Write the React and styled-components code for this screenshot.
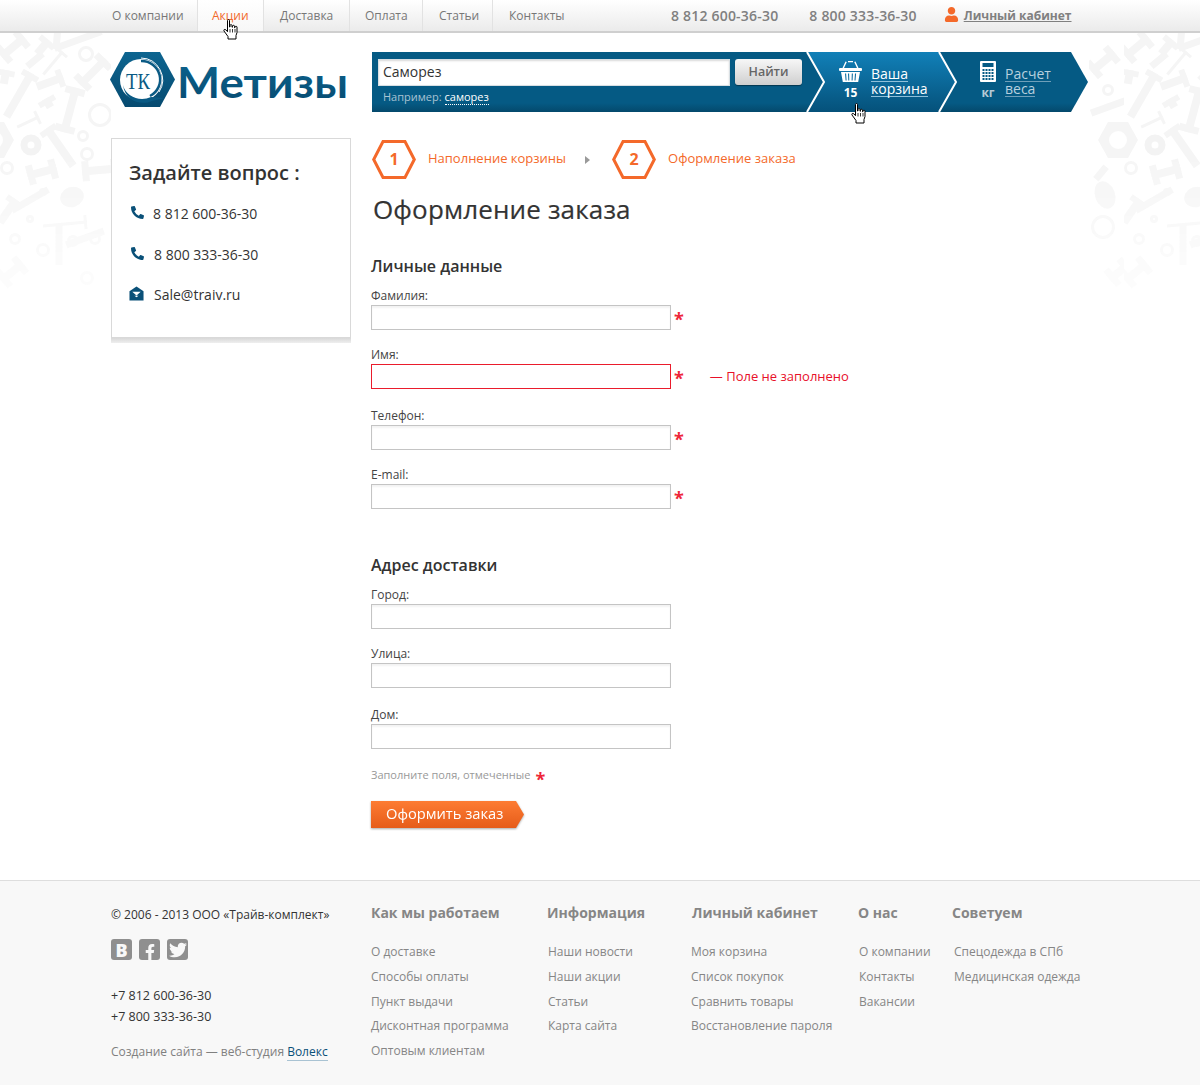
import React from "react";
import styled, { createGlobalStyle } from "styled-components";
import { FaPhoneAlt, FaUser, FaFacebookF, FaTwitter } from "react-icons/fa";

const GlobalStyle = createGlobalStyle`
  html, body {
    margin: 0;
    padding: 0;
    background: #fff;
    font-family: "Open Sans", "Noto Sans", sans-serif;
    color: #333;
  }
  * {
    box-sizing: border-box;
  }
`;

const Page = styled.div`
  position: relative;
  width: 100%;
  height: 1085px;
  overflow: hidden;
  display: flex;
  flex-direction: column;
`;

const Pattern = styled.svg`
  position: absolute;
  top: 33px;
  left: 0;
  width: 100%;
  height: 300px;
  mask-image: linear-gradient(#000 40%, transparent 100%);
`;

const TopBar = styled.header`
  position: relative;
  z-index: 3;
  height: 33px;
  flex: none;
  background: linear-gradient(#fff, #ebebeb);
  border-bottom: 2px solid #cfcfcf;
`;

const TopInner = styled.div`
  width: 978px;
  height: 31px;
  margin: 0 auto;
  display: flex;
  align-items: stretch;
`;

const Nav = styled.nav`
  display: flex;
  width: 560px;
`;

const NavItem = styled.a`
  position: relative;
  flex: none;
  width: ${(p) => p.$w}px;
  padding-left: ${(p) => p.$pl}px;
  display: flex;
  align-items: center;
  font-size: 12px;
  color: ${(p) => (p.$active ? "#f2692a" : "#777")};
  background: ${(p) => (p.$active ? "linear-gradient(#fff, #f7f7f7)" : "none")};
  border-right: 1px solid #e2e2e2;
  &:last-child {
    border-right: none;
  }
`;

const NavCursor = styled.span`
  position: absolute;
  left: 25px;
  top: 19px;
`;

const TopPhone = styled.span`
  align-self: center;
  font-size: 14px;
  letter-spacing: 0.2px;
  font-weight: 600;
  color: #808080;
  margin-right: 31px;
`;

const Cabinet = styled.a`
  align-self: center;
  display: flex;
  align-items: center;
  gap: 5px;
  margin-left: -4px;
  font-size: 12px;
  font-weight: 700;
  color: #808080;
  text-decoration: underline;
  svg {
    color: #f4692a;
    width: 15px;
    height: 15px;
    margin-top: -3px;
  }
`;

const Wrap = styled.div`
  position: relative;
  z-index: 1;
  flex: 1;
  width: 978px;
  margin: 0 auto;
  background: #fff;
`;

const HeadRow = styled.div`
  display: flex;
  height: 105px;
  padding-top: 18px;
`;

const LogoBox = styled.a`
  flex: none;
  width: 262px;
  margin-left: -1px;
  svg {
    display: block;
  }
`;

const BarWrap = styled.div`
  position: relative;
  width: 716px;
  height: 60px;
  margin-top: 1px;
`;

const Bar = styled.div`
  display: flex;
  height: 60px;
  background: linear-gradient(#055a84 0, #055a84 85%, #04496c 100%);
  clip-path: polygon(0 0, 699px 0, 716px 30px, 699px 60px, 0 60px);
`;

const SearchPart = styled.form`
  flex: none;
  width: 436px;
  padding: 7px 0 0 6px;
`;

const SearchRow = styled.div`
  display: flex;
  gap: 5px;
`;

const SearchInput = styled.input`
  width: 352px;
  height: 27px;
  padding: 0 4px 2px;
  border: 1px solid #d8dfe3;
  background: #fff;
  font: 14px "Open Sans", sans-serif;
  color: #333;
  box-shadow: inset 0 1px 2px rgba(0, 0, 0, 0.15);
  outline: none;
`;

const SearchButton = styled.button`
  width: 67px;
  height: 26px;
  border: none;
  border-radius: 3px;
  background: linear-gradient(#f7f7f7, #cfcfcf);
  box-shadow: 0 1px 1px rgba(0, 0, 0, 0.4);
  font: 600 12.5px "Open Sans", sans-serif;
  color: #666;
  padding: 0 0 1px;
`;

const Hint = styled.div`
  margin: 3px 0 0 5px;
  font-size: 11px;
  line-height: 15px;
  color: #a9c3d3;
  span {
    color: #fff;
    border-bottom: 1px dotted #fff;
  }
`;

const CartPart = styled.div`
  flex: none;
  width: 148px;
  display: flex;
  background: linear-gradient(#1180b8, #05517a);
  clip-path: polygon(0 0, 131px 0, 148px 30px, 131px 60px, 0 60px, 17px 30px);
`;

const CalcPart = styled.div`
  flex: 1;
  display: flex;
`;

const IconCol = styled.div`
  flex: none;
  width: ${(p) => p.$w}px;
  margin-left: ${(p) => p.$ml}px;
  display: flex;
  flex-direction: column;
  align-items: center;
  padding-top: 9px;
`;

const IconCount = styled.span`
  font-size: ${(p) => p.$size}px;
  line-height: 14px;
  margin-top: 4px;
  font-weight: 700;
  color: ${(p) => p.$color};
`;

const BarLink = styled.div`
  display: flex;
  flex-direction: column;
  align-items: flex-start;
  margin-left: ${(p) => p.$ml}px;
  padding-top: 15px;
  font-size: 14px;
  color: ${(p) => p.$color};
  span {
    border-bottom: 1px solid ${(p) => p.$line};
    line-height: 14px;
  }
`;

const Chevrons = styled.svg`
  position: absolute;
  top: 0;
  left: 0;
  pointer-events: none;
`;

const CartCursor = styled.span`
  position: absolute;
  left: 479px;
  top: 51px;
`;

const Content = styled.div`
  display: flex;
  gap: 20px;
`;

const Aside = styled.aside`
  flex: none;
  width: 240px;
`;

const AskBox = styled.div`
  height: 200px;
  border: 1px solid #d9d9d9;
  padding: 18px 17px 0;
  background: #fff;
`;

const AskBand = styled.div`
  height: 5px;
  background: linear-gradient(#d8d8d8, #efefef);
`;

const AskTitle = styled.h3`
  margin: 0 0 14px;
  font-size: 20px;
  line-height: 32px;
  font-weight: 600;
  color: #333;
`;

const AskRow = styled.div`
  display: flex;
  align-items: center;
  height: 20px;
  margin-bottom: ${(p) => p.$mb}px;
  font-size: 14px;
  color: #333;
  gap: ${(p) => p.$gap}px;
  svg {
    flex: none;
    width: ${(p) => p.$icon}px;
    height: ${(p) => p.$icon}px;
    margin-left: ${(p) => 15 - p.$icon}px;
    color: #0a5078;
    margin-top: -1px;
  }
`;

const Main = styled.main`
  flex: 1;
  padding-top: 2px;
`;

const Steps = styled.div`
  display: flex;
  align-items: center;
  height: 39px;
  margin-left: 1px;
`;

const StepHex = styled.div`
  position: relative;
  width: 44px;
  height: 39px;
  padding-bottom: 2px;
  display: flex;
  align-items: center;
  justify-content: center;
  font-size: 16px;
  font-weight: 700;
  color: #f4692a;
  svg {
    position: absolute;
    inset: 0;
  }
  span {
    position: relative;
  }
`;

const StepText = styled.span`
  margin: -3px 0 0 12px;
  font-size: 13px;
  color: #f4692a;
`;

const StepArrow = styled.i`
  width: 0;
  height: 0;
  margin: 1px 22px 0 19px;
  border-left: 5px solid #9a9a9a;
  border-top: 4px solid transparent;
  border-bottom: 4px solid transparent;
`;

const Title = styled.h1`
  margin: 12px 0 0 2px;
  font-size: 26px;
  line-height: 36px;
  font-weight: 400;
  letter-spacing: 0.15px;
  color: #333;
  -webkit-text-stroke: 0.2px #333;
`;

const Section = styled.h2`
  margin: ${(p) => p.$mt}px 0 11px;
  font-size: 16px;
  line-height: 22px;
  font-weight: 600;
  color: #333;
`;

const Field = styled.div`
  margin-bottom: ${(p) => p.$mb || 0}px;
`;

const Label = styled.label`
  display: block;
  margin-bottom: 1px;
  font-size: 12px;
  line-height: 16px;
  color: #444;
`;

const FieldRow = styled.div`
  display: flex;
  align-items: flex-start;
`;

const Input = styled.input`
  flex: none;
  width: 300px;
  height: 25px;
  padding: 0 5px;
  background: #fff;
  border: 1px solid ${(p) => (p.$error ? "#ea1c2c" : "#c4c4c4")};
  box-shadow: ${(p) => (p.$error ? "none" : "inset 0 2px 2px rgba(0, 0, 0, 0.05)")};
  outline: none;
`;

const Star = styled.span`
  font-size: 18px;
  line-height: 24px;
  font-weight: 700;
  color: #ee2638;
  margin-left: ${(p) => p.$ml}px;
  height: ${(p) => p.$h}px;
  padding-top: ${(p) => p.$pt}px;
`;

const ErrorText = styled.span`
  margin-left: 26px;
  font-size: 13px;
  line-height: 25px;
  color: #e8102a;
`;

const Note = styled.div`
  display: flex;
  margin-top: 18px;
  height: 16px;
  font-size: 11px;
  line-height: 16px;
  color: #999;
`;

const SubmitShadow = styled.div`
  width: 153px;
  margin-top: 18px;
  filter: drop-shadow(0 1px 1px rgba(0, 0, 0, 0.35));
`;

const Submit = styled.button`
  display: block;
  width: 153px;
  height: 27px;
  padding: 0 0 3px 15px;
  border: none;
  text-align: left;
  background: linear-gradient(#fd7c33, #e65c1a);
  clip-path: polygon(0 0, 145px 0, 153px 13.5px, 145px 27px, 0 27px);
  font: 400 14.7px "Open Sans", sans-serif;
  color: #fff;
`;

const Footer = styled.footer`
  position: relative;
  z-index: 1;
  flex: none;
  height: 205px;
  background: #f8f8f8;
  border-top: 1px solid #dedede;
`;

const FooterInner = styled.div`
  width: 978px;
  margin: 0 auto;
  display: flex;
  padding-top: 22px;
`;

const FootAbout = styled.div`
  flex: none;
  width: 260px;
  padding-top: 2px;
`;

const Copy = styled.div`
  font-size: 12px;
  line-height: 20px;
  color: #333;
`;

const Socials = styled.div`
  display: flex;
  gap: 7px;
  margin-top: 14px;
`;

const Social = styled.a`
  width: 21px;
  height: 21px;
  border-radius: 3px;
  background: #8f8f8f;
  color: #f8f8f8;
  display: flex;
  align-items: center;
  justify-content: center;
  overflow: hidden;
  font: 800 18px "Open Sans", sans-serif;
  svg.facebook {
    margin-top: 5px;
  }
`;

const FootPhones = styled.div`
  margin-top: 25px;
  font-size: 12.5px;
  line-height: 21px;
  color: #333;
`;

const Credit = styled.div`
  margin-top: 15px;
  font-size: 12px;
  line-height: 20px;
  color: #808080;
  a {
    color: #0a5078;
    border-bottom: 1px solid #a9c3d3;
  }
`;

const FootCol = styled.div`
  flex: none;
  width: ${(p) => p.$w}px;
`;

const FootTitle = styled.div`
  font-size: 14px;
  line-height: 20px;
  font-weight: 700;
  color: #868686;
  margin-bottom: 17px;
  padding-left: ${(p) => p.$pl || 0}px;
`;

const FootLink = styled.a`
  display: block;
  font-size: 12px;
  line-height: 24.75px;
  color: #868686;
  padding-left: ${(p) => p.$pl || 0}px;
`;

function Hand() {
  return (
    <svg width="16" height="23" viewBox="0 0 16 23">
      <path
        d="M4.500 1.500c0-1.300 2-1.300 2 0v6.500h.5v-1.500c0-1.200 2-1.200 2 0v1.700h.5v-1c0-1.200 2-1.200 2 0v1.500h.5v-.6c0-1.100 2-1.100 2 0v5.400l-1 3v3.500h-8v-2.500l-4-5.500c-.7-1.200.8-2.300 1.800-1.200l1.700 1.900z"
        fill="#fff"
        stroke="#000"
        strokeWidth="1"
      />
      <path d="M7 10v3.500M9.500 10v3.500M12 10v3.500" stroke="#000" strokeWidth="0.8" />
    </svg>
  );
}

function Basket() {
  return (
    <svg width="23" height="21" viewBox="0 0 23 21" fill="#fff">
      <path d="M6.500 0.500l1.300.6-2.800 6h-1.500zM16.500 .5l-1.300.6 2.800 6h1.500zM9 0h5v1.300H9z" />
      <rect x="0" y="7" width="23" height="3" rx="1" />
      <path d="M2 11h19l-1.800 10H3.800zM6 12.500l.6 7h1l-.5-7zM9 12.500l.3 7h1l-.2-7zM12.800 12.500l-.2 7h1l.3-7zM16 12.500l-.5 7h1l.6-7z" fillRule="evenodd" />
    </svg>
  );
}

function Calculator() {
  const cells = [];
  for (let row = 0; row < 4; row++) {
    for (let col = 0; col < 4; col++) {
      cells.push(<rect key={`${row}-${col}`} x={2.5 + col * 3} y={8 + row * 3} width="2" height="2" />);
    }
  }
  return (
    <svg width="16" height="21" viewBox="0 0 16 21">
      <rect width="16" height="21" rx="1" fill="#fff" />
      <g fill="#055a84">
        <rect x="2.500" y="2" width="11" height="4" />
        {cells}
      </g>
    </svg>
  );
}

function Mail() {
  return (
    <svg viewBox="0 0 16 15">
      <path d="M8 0l7.500 5v10H.5V5z" fill="currentColor" />
      <path d="M3.500 5.500h9L8 9.500z M5.800 9.800h4.400L8 11.600z" fill="#fff" />
    </svg>
  );
}

function Logo() {
  return (
    <svg width="250" height="58" viewBox="0 0 250 58">
      <defs>
        <linearGradient id="logoFill" x1="0" y1="0" x2="0" y2="1">
          <stop offset="0" stopColor="#0d6590" />
          <stop offset="1" stopColor="#064a70" />
        </linearGradient>
      </defs>
      <path d="M15 1h35l15 27.500-15 27.500H15L0 28.500z" fill="url(#logoFill)" />
      <circle cx="31" cy="29" r="21" fill="#fff" />
      <path d="M31 10a18.500 18.500 0 0 1 9 35" fill="none" stroke="#0a5a84" strokeWidth="2.500" />
      <path d="M13 34c3 12 17 17 28 12l13 1-12 3c-11 5-27 0-29-16z" fill="#0a5a84" />
      <path d="M31 7a22 22 0 0 1 18 34" fill="none" stroke="#fff" strokeWidth="1" />
      <text x="28" y="38" textAnchor="middle" fontFamily="Liberation Serif, serif" fontSize="24" fill="#0a5a84" textLength="24" lengthAdjust="spacingAndGlyphs">ТК</text>
      <text x="67" y="47" fontFamily="Lato, sans-serif" fontSize="42" fontWeight="700" fill="url(#logoFill)" textLength="171" lengthAdjust="spacingAndGlyphs">Метизы</text>
    </svg>
  );
}

const PIECES = [
  ["cross", 13, 14, 50, 30], ["bolt", 43, 14, 40, 18], ["bar", 57, 5, 5, 22], ["bar", 78, 7, 70, 50],
  ["washer", 86, 21, 0, 8], ["bar", 35, 27, 50, 20], ["thin", 53, 30, 40, 30], ["cross", 93, 39, 45, 36],
  ["bolt", 5, 44, 10, 14], ["bolt", 19, 62, 30, 50], ["bolt", 50, 49, 70, 28], ["cross", 70, 77, 15, 46],
  ["bolt", 48, 70, -30, 10], ["washer", 100, 82, 0, 12], ["nut", -6, 107, 0, 20], ["thin", 28, 89, 65, 24],
  ["thick", 31, 112, 0, 10], ["bolt", 60, 114, -35, 46], ["washer", 83, 103, 0, 6], ["washer", 87, 121, 0, 7],
  ["washer", 7, 135, 0, 7], ["cross", 100, 137, 85, 36], ["cross", 42, 139, 75, 30], ["bar", 30, 167, 60, 42],
  ["washer", 43, 159, 0, 4], ["screw", 72, 164, -20, 24], ["bolt", 8, 178, 35, 28], ["washer", 30, 186, 0, 4],
  ["thin", 65, 191, 85, 44], ["washer", 15, 206, 0, 6], ["washer", 73, 208, 0, 6], ["washer", 95, 206, 0, 6],
  ["washer", 43, 217, 0, 7], ["bar", 59, 212, 0, 40], ["washer", 87, 245, 0, 7], ["cross", 12, 239, 50, 28],
  ["bar", 85, 205, 70, 40], ["cross", 260, 29, 50, 30], ["washer", 265, 57, 0, 6], ["bar", 265, 74, 70, 36],
  ["nut", 275, 107, 0, 20], ["bar", 258, 140, 40, 16], ["screw", 262, 162, 70, 28], ["washer", 260, 194, 0, 12],
  ["cross", 276, 239, 50, 24],
];

const BOLT = "#f5f5f5";

function Piece({ kind, x, y, rot, size }) {
  const t = `translate(${x} ${y}) rotate(${rot})`;
  if (kind === "washer") return <circle cx={x} cy={y} r={size - 1.500} fill="none" stroke={BOLT} strokeWidth="3" />;
  if (kind === "thick") return <circle cx={x} cy={y} r={size - 3} fill="none" stroke="#f3f3f3" strokeWidth="7" />;
  if (kind === "nut") {
    return (
      <g transform={t}>
        <path d="M-10-18H10L20 0 10 18H-10L-20 0z" fill={BOLT} />
        <circle r="9" fill="#fff" />
      </g>
    );
  }
  if (kind === "screw") {
    return (
      <g transform={t}>
        <ellipse rx={size / 2} ry="10" fill={BOLT} />
      </g>
    );
  }
  if (kind === "bar") return <rect transform={t} x="-3.500" y={-size / 2} width="7" height={size} fill={BOLT} />;
  if (kind === "thin") {
    return (
      <g transform={t} fill={BOLT}>
        <rect x="-1.500" y={-size / 2} width="3" height={size} />
        <rect x="-7" y={-size / 2} width="14" height="3" />
      </g>
    );
  }
  if (kind === "cross") {
    return (
      <g transform={t} fill={BOLT}>
        <rect x="-4" y={-size / 2} width="8" height={size} />
        <rect x="-10" y={-size / 2} width="20" height="7" />
        <rect x="-10" y={size / 2 - 7} width="20" height="7" />
      </g>
    );
  }
  return (
    <g transform={t} fill={BOLT}>
      <rect x="-4" y={-size / 2} width="8" height={size} />
      <rect x="-9" y={-size / 2} width="18" height="6" />
    </g>
  );
}

const NAV_ITEMS = [
  { label: "О компании", w: 87, pl: 1 },
  { label: "Акции", w: 66, pl: 14, active: true },
  { label: "Доставка", w: 86, pl: 16 },
  { label: "Оплата", w: 73, pl: 15 },
  { label: "Статьи", w: 70, pl: 16 },
  { label: "Контакты", w: 80, pl: 16 },
];

const FOOT_COLS = [
  { w: 176, title: "Как мы работаем", links: ["О доставке", "Способы оплаты", "Пункт выдачи", "Дисконтная программа", "Оптовым клиентам"] },
  { w: 144, title: "Информация", linkPad: 1, links: ["Наши новости", "Наши акции", "Статьи", "Карта сайта"] },
  { w: 167, title: "Личный кабинет", titlePad: 1, links: ["Моя корзина", "Список покупок", "Сравнить товары", "Восстановление пароля"] },
  { w: 94, title: "О нас", linkPad: 1, links: ["О компании", "Контакты", "Вакансии"] },
  { w: 137, title: "Советуем", linkPad: 2, links: ["Спецодежда в СПб", "Медицинская одежда"] },
];

function Hex({ n }) {
  return (
    <StepHex>
      <svg width="44" height="39" viewBox="0 0 44 39">
        <path d="M11 1.500h22L42.300 19.500 33 37.500H11L1.700 19.500z" fill="#fff" stroke="#f4692a" strokeWidth="3" />
      </svg>
      <span>{n}</span>
    </StepHex>
  );
}

function FormField({ label, error, mb, required = true }) {
  return (
    <Field $mb={mb}>
      <Label>{label}</Label>
      <FieldRow>
        <Input $error={error} />
        {required && <Star $ml={3} $h={25} $pt={2}>*</Star>}
        {error && <ErrorText>— Поле не заполнено</ErrorText>}
      </FieldRow>
    </Field>
  );
}

export default function App() {
  return (
    <Page>
      <GlobalStyle />
      <Pattern aria-hidden="true">
        <defs>
          <pattern id="bolts" width="281" height="300" patternUnits="userSpaceOnUse">
            {PIECES.map(([kind, x, y, rot, size], i) => (
              <Piece key={i} kind={kind} x={x} y={y} rot={rot} size={size} />
            ))}
          </pattern>
        </defs>
        <rect width="100%" height="100%" fill="url(#bolts)" />
      </Pattern>

      <TopBar>
        <TopInner>
          <Nav>
            {NAV_ITEMS.map((item) => (
              <NavItem key={item.label} $w={item.w} $pl={item.pl} $active={item.active}>
                {item.label}
                {item.active && (
                  <NavCursor>
                    <Hand />
                  </NavCursor>
                )}
              </NavItem>
            ))}
          </Nav>
          <TopPhone>8 812 600-36-30</TopPhone>
          <TopPhone>8 800 333-36-30</TopPhone>
          <Cabinet>
            <FaUser />
            Личный кабинет
          </Cabinet>
        </TopInner>
      </TopBar>

      <Wrap>
        <HeadRow>
          <LogoBox>
            <Logo />
          </LogoBox>
          <BarWrap>
            <Bar>
              <SearchPart>
                <SearchRow>
                  <SearchInput defaultValue="Саморез" />
                  <SearchButton type="button">Найти</SearchButton>
                </SearchRow>
                <Hint>
                  Например: <span>саморез</span>
                </Hint>
              </SearchPart>
              <CartPart>
                <IconCol $w={25} $ml={30}>
                  <Basket />
                  <IconCount $size={12} $color="#fff">15</IconCount>
                </IconCol>
                <BarLink $ml={8} $color="#fff" $line="#8fc0da">
                  <span>Ваша</span>
                  <span>корзина</span>
                </BarLink>
              </CartPart>
              <CalcPart>
                <IconCol $w={20} $ml={22}>
                  <Calculator />
                  <IconCount $size={12} $color="#b7cad6">кг</IconCount>
                </IconCol>
                <BarLink $ml={7} $color="#b7d0df" $line="#6f9fb9">
                  <span>Расчет</span>
                  <span>веса</span>
                </BarLink>
              </CalcPart>
            </Bar>
            <Chevrons width="716" height="60" viewBox="0 0 716 60">
              <path d="M435 0l17 30-17 30M567 0l17 30-17 30" fill="none" stroke="#fff" strokeWidth="2" />
            </Chevrons>
            <CartCursor>
              <Hand />
            </CartCursor>
          </BarWrap>
        </HeadRow>

        <Content>
          <Aside>
            <AskBox>
              <AskTitle>Задайте вопрос :</AskTitle>
              <AskRow $gap={9} $mb={21} $icon={13}>
                <FaPhoneAlt />8 812 600-36-30
              </AskRow>
              <AskRow $gap={10} $mb={20} $icon={13}>
                <FaPhoneAlt />8 800 333-36-30
              </AskRow>
              <AskRow $gap={10} $mb={0} $icon={15}>
                <Mail />
                Sale@traiv.ru
              </AskRow>
            </AskBox>
            <AskBand />
          </Aside>

          <Main>
            <Steps>
              <Hex n={1} />
              <StepText>Наполнение корзины</StepText>
              <StepArrow />
              <Hex n={2} />
              <StepText>Оформление заказа</StepText>
            </Steps>
            <Title>Оформление заказа</Title>

            <Section $mt={28}>Личные данные</Section>
            <FormField label="Фамилия:" mb={17} />
            <FormField label="Имя:" error mb={19} />
            <FormField label="Телефон:" mb={17} />
            <FormField label="E-mail:" />

            <Section $mt={45}>Адрес доставки</Section>
            <FormField label="Город:" required={false} mb={17} />
            <FormField label="Улица:" required={false} mb={19} />
            <FormField label="Дом:" required={false} />

            <Note>
              Заполните поля, отмеченные
              <Star $ml={5} $h={16} $pt={0}>*</Star>
            </Note>
            <SubmitShadow>
              <Submit type="button">Оформить заказ</Submit>
            </SubmitShadow>
          </Main>
        </Content>
      </Wrap>

      <Footer>
        <FooterInner>
          <FootAbout>
            <Copy>© 2006 - 2013 ООО «Трайв-комплект»</Copy>
            <Socials>
              <Social>В</Social>
              <Social>
                <FaFacebookF size={16} className="facebook" />
              </Social>
              <Social>
                <FaTwitter size={18} />
              </Social>
            </Socials>
            <FootPhones>
              +7 812 600-36-30
              <br />
              +7 800 333-36-30
            </FootPhones>
            <Credit>
              Создание сайта — веб-студия <a>Волекс</a>
            </Credit>
          </FootAbout>
          {FOOT_COLS.map((col) => (
            <FootCol key={col.title} $w={col.w}>
              <FootTitle $pl={col.titlePad}>{col.title}</FootTitle>
              {col.links.map((link) => (
                <FootLink key={link} $pl={col.linkPad}>
                  {link}
                </FootLink>
              ))}
            </FootCol>
          ))}
        </FooterInner>
      </Footer>
    </Page>
  );
}
